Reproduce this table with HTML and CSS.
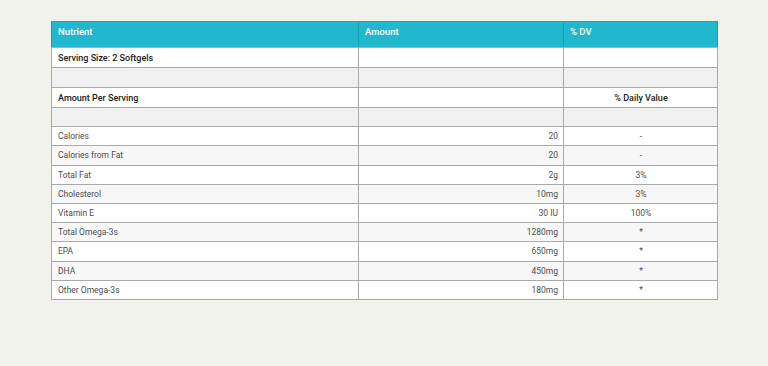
FILE: index.html
```html
<!DOCTYPE html>
<html>
<head>
<meta charset="utf-8">
<link rel="stylesheet" href="styles.css">
</head>
<body>
<div class="wrap">
<table class="facts">
  <thead>
    <tr><th class="c1">Nutrient</th><th class="c2">Amount</th><th class="c3">% DV</th></tr>
  </thead>
  <tbody>
    <tr class="tall strong"><td>Serving Size: 2 Softgels</td><td></td><td></td></tr>
    <tr class="tall blank"><td></td><td></td><td></td></tr>
    <tr class="tall strong"><td>Amount Per Serving</td><td></td><td class="dv">% Daily Value</td></tr>
    <tr class="blank"><td></td><td></td><td></td></tr>
    <tr><td>Calories</td><td class="amt">20</td><td class="dv">-</td></tr>
    <tr class="alt"><td>Calories from Fat</td><td class="amt">20</td><td class="dv">-</td></tr>
    <tr><td>Total Fat</td><td class="amt">2g</td><td class="dv">3%</td></tr>
    <tr class="alt"><td>Cholesterol</td><td class="amt">10mg</td><td class="dv">3%</td></tr>
    <tr><td>Vitamin E</td><td class="amt">30 IU</td><td class="dv">100%</td></tr>
    <tr class="alt"><td>Total Omega-3s</td><td class="amt">1280mg</td><td class="dv">*</td></tr>
    <tr><td>EPA</td><td class="amt">650mg</td><td class="dv">*</td></tr>
    <tr class="alt"><td>DHA</td><td class="amt">450mg</td><td class="dv">*</td></tr>
    <tr><td>Other Omega-3s</td><td class="amt">180mg</td><td class="dv">*</td></tr>
  </tbody>
</table>
</div>
</body>
</html>
```
FILE: styles.css
```css
html, body {
  margin: 0;
  padding: 0;
  background: #f2f2ed;
}
body {
  font-family: Roboto, "Liberation Sans", Arial, sans-serif;
  width: 768px;
  height: 366px;
  overflow: hidden;
}
.wrap {
  padding: 21px 0 0 51px;
}
.facts {
  border-collapse: collapse;
  width: 666px;
  table-layout: fixed;
  font-size: 8.5px;
  color: #4d4d4d;
}
.facts th, .facts td {
  border: 1px solid #a9a9a9;
  padding: 0 5px;
  text-align: left;
  white-space: nowrap;
}
.facts th {
  background: #21b8cd;
  color: #fff;
  font-weight: 500;
  font-size: 9.5px;
  height: 26px;
  vertical-align: top;
  padding-top: 4px;
  padding-left: 6px;
  box-sizing: border-box;
  border-color: #1ea5b8 #1a9fb1 #9fb5b8;
}
.facts .c1 { width: 307px; }
.facts .c2 { width: 205px; }
.facts .c3 { width: 154px; }
.facts td {
  height: 19.2px;
  box-sizing: border-box;
  background: #fff;
  padding-left: 6px;
}
.facts tr.tall td { height: 20px; }
.facts tr.strong td {
  color: #1a1a1a;
  font-weight: 500;
  font-size: 9px;
}
.facts tr.blank td { background: #f0f0f0; }
.facts tr.alt td { background: #f7f7f7; }
.facts td.amt { text-align: right; padding-right: 5px; }
.facts td.dv { text-align: center; }
```
